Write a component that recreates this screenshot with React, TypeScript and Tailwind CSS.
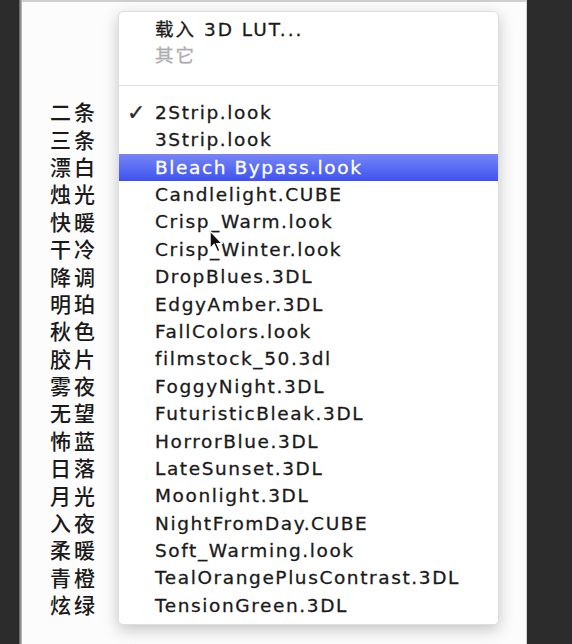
import React from "react";

const items = [
  "2Strip.look",
  "3Strip.look",
  "Bleach Bypass.look",
  "Candlelight.CUBE",
  "Crisp_Warm.look",
  "Crisp_Winter.look",
  "DropBlues.3DL",
  "EdgyAmber.3DL",
  "FallColors.look",
  "filmstock_50.3dl",
  "FoggyNight.3DL",
  "FuturisticBleak.3DL",
  "HorrorBlue.3DL",
  "LateSunset.3DL",
  "Moonlight.3DL",
  "NightFromDay.CUBE",
  "Soft_Warming.look",
  "TealOrangePlusContrast.3DL",
  "TensionGreen.3DL",
];

const labels = [
  "二条", "三条", "漂白", "烛光", "快暖", "干冷", "降调", "明珀", "秋色", "胶片",
  "雾夜", "无望", "怖蓝", "日落", "月光", "入夜", "柔暖", "青橙", "炫绿",
];

const menuFont = { fontFamily: '"DejaVu Sans", "Noto Sans CJK SC", sans-serif' };
const cjkFont = { fontFamily: '"Noto Sans CJK SC", sans-serif' };

export default function App() {
  return (
    <div className="w-[572px] h-[644px] bg-[#2c2c2c] flex overflow-hidden">
      <div className="w-[19px] shrink-0" />
      <div className="w-[3px] shrink-0 bg-gradient-to-r from-[#5a5a5a] to-[#c8c8c8]" />
      <div className="relative w-[505px] shrink-0 h-full bg-[#fcfcfc] border-t-2 border-t-[#cfcfcf] border-r border-r-[#d4d4d4]">
        <div className="pt-[96px] pl-[28px] flex flex-col text-[#1a1a1a] text-[21px] tracking-[3px] font-medium" style={cjkFont}>
          {labels.map((l) => (
            <div key={l} className="h-[27.4px] flex items-center leading-none">
              {l}
            </div>
          ))}
        </div>

        <div
          className="absolute left-[96px] top-[9px] w-[381px] h-[614px] bg-white rounded-[5px] border border-[#dedede] shadow-[0_5px_16px_rgba(0,0,0,0.22)] flex flex-col pt-[5px] [-webkit-text-stroke:0.3px]"
          style={menuFont}
        >
          <div className="h-[26px] flex items-center pl-[36px] text-[18.5px] tracking-[2px] text-[#1a1a1a]">
            载入 3D LUT...
          </div>
          <div className="h-[26px] flex items-center pl-[36px] text-[18.5px] tracking-[2px] text-[#adadad]">
            其它
          </div>
          <div className="mt-[16px] h-px bg-[#e2e2e2]" />
          <div className="mt-[13px] flex flex-col">
            {items.map((it, i) => {
              const hi = i === 2;
              return (
                <div
                  key={it}
                  className={
                    hi
                      ? "relative h-[27.4px] flex items-center pl-[36px] text-[18.5px] tracking-[1.6px] text-white bg-gradient-to-b from-[#7885f6] to-[#3e51ef]"
                      : "relative h-[27.4px] flex items-center pl-[36px] text-[18.5px] tracking-[1.6px] text-[#1a1a1a]"
                  }
                >
                  {i === 0 && (
                    <span className="absolute left-[8px] text-[22px] leading-none text-[#2a2a2a]">✓</span>
                  )}
                  {it}
                </div>
              );
            })}
          </div>
          <svg
            className="absolute left-[90px] top-[218px]"
            width="16"
            height="24"
            viewBox="0 0 14 21"
          >
            <path d="M1 1 L1 16 L4.5 12.5 L7.5 19 L9.5 18 L6.8 11.8 L11.5 11.8 Z" fill="#111" stroke="#fff" strokeWidth="1" />
          </svg>
        </div>
      </div>
      <div className="flex-1" />
    </div>
  );
}
